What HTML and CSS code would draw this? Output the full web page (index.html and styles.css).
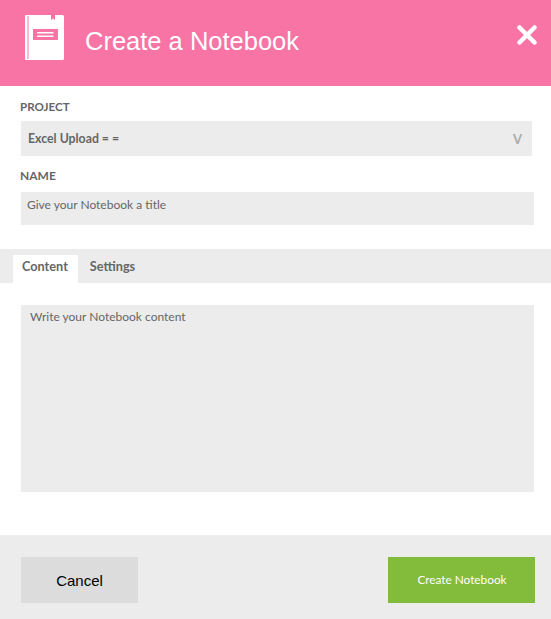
FILE: index.html
```html
<!DOCTYPE html>
<html lang="en">
<head>
  <meta charset="UTF-8" />
  <title>Create a Notebook</title>
  <link rel="stylesheet" href="styles.css">
</head>
<body>
  <div id="main">
    <header class="modal-head">
      <svg class="logo" width="39" height="45" viewBox="0 0 39 45">
        <path fill="#fff" d="M1 0H26V5L28 3.500L30 5V0H37.500Q39 0 39 1.500V43.500Q39 45 37.500 45H1Q0 45 0 44V1Q0 0 1 0Z"/>
        <rect x="2.500" y="1" width="1" height="43" fill="#f774a5"/>
        <rect x="8" y="14" width="25" height="11" fill="#f774a5"/>
        <rect x="12" y="17" width="16.500" height="1.500" fill="#fff"/>
        <rect x="12" y="20.500" width="16.500" height="1.500" fill="#fff"/>
      </svg>
      <h1>Create a Notebook</h1>
      <svg class="close" width="20" height="20" viewBox="0 0 20 20">
        <path d="M2.500 2.500L17.500 17.500M17.500 2.500L2.500 17.500" stroke="#fff" stroke-width="4.500" stroke-linecap="round"/>
      </svg>
    </header>

    <div class="fields">
      <label class="field-label first">PROJECT</label>
      <div class="select">
        <span>Excel Upload = =</span>
        <span class="arrow">V</span>
      </div>
      <label class="field-label second">NAME</label>
      <div class="input">Give your Notebook a title</div>
    </div>

    <nav class="tabs">
      <a class="tab active" href="#">Content</a>
      <a class="tab" href="#">Settings</a>
    </nav>

    <div class="content-pane">
      <div class="textarea">Write your Notebook content</div>
    </div>

    <footer class="modal-foot">
      <button class="btn cancel">Cancel</button>
      <button class="btn create">Create Notebook</button>
    </footer>
  </div>
</body>
</html>
```

FILE: styles.css
```css
*{
  margin:0;
  padding:0;
  box-sizing: border-box;
}
html,body{
  height:100%;
  width:100%;
}
body {
  font-family: "Lato", "Open Sans", sans-serif;
  background-color: #fff;
  color: #666;
  font-size: 12px;
}
#main {
  height: 619px;
  display: flex;
  flex-direction: column;
}
.modal-head {
  background-color: #f774a5;
  height: 86px;
  display: flex;
  align-items: center;
  padding: 0 14px 0 25px;
  flex-shrink: 0;
}
.logo {
  margin-top: -11px;
}
.modal-head h1 {
  font-family: "Liberation Sans", Arial, sans-serif;
  font-weight: normal;
  font-size: 25.5px;
  color: #fff;
  margin-left: 21px;
  margin-top: -3px;
  flex: 1;
}
.close {
  margin-top: -16px;
}
.fields {
  padding: 0 17px 0 21px;
  height: 163px;
}
.field-label {
  display: block;
  font-weight: bold;
  font-size: 12px;
  line-height: 15px;
  color: #666;
}
.first {
  margin-left: -1px;
  padding-top: 13px;
  height: 35px;
  font-size: 11.6px;
}
.second {
  padding-top: 12px;
  height: 36px;
  margin-left: -1px;
}
.select {
  background: #ececec;
  height: 35px;
  width: 511px;
  display: flex;
  justify-content: space-between;
  align-items: center;
  padding: 0 10px 0 7px;
  font-weight: bold;
  font-size: 12.3px;
}
.arrow {
  color: #aaa;
  font-size: 13px;
}
.input {
  background: #ececec;
  height: 33px;
  padding: 5px 6px;
  line-height: 16px;
}
.tabs {
  background: #ececec;
  height: 34px;
  display: flex;
  align-items: flex-end;
  padding-left: 13px;
  flex-shrink: 0;
}
.tab {
  height: 28px;
  padding: 0 10px 0 9px;
  line-height: 22px;
  font-weight: bold;
  font-size: 12.7px;
  color: #666;
  text-decoration: none;
}
.tab + .tab {
  padding-left: 12px;
}
.tab.active {
  background: #fff;
}
.content-pane {
  flex: 1;
  padding: 22px 17px 43px 21px;
}
.textarea {
  background: #ececec;
  height: 187px;
  padding: 4px 9px;
  line-height: 16px;
}
.modal-foot {
  background: #ececec;
  height: 84px;
  display: flex;
  justify-content: space-between;
  padding: 22px 16px 16px 21px;
  flex-shrink: 0;
}
.btn {
  border: none;
  height: 46px;
  cursor: pointer;
}
.cancel {
  width: 117px;
  background: #dcdcdc;
  color: #000;
  font-family: "Liberation Sans", Arial, sans-serif;
  font-size: 15px;
}
.create {
  width: 147px;
  background: #82bc3a;
  color: #fff;
  font-family: "Lato", sans-serif;
  font-size: 11.8px;
  padding: 0 0 2px 1px;
}
```
